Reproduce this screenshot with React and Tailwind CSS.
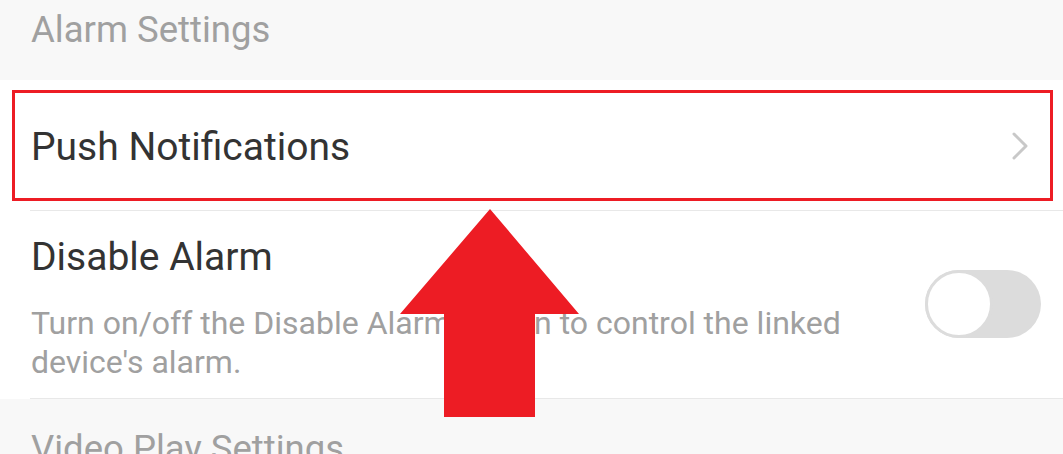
export default function App() {
  return (
    <div className="relative w-[1063px] h-[454px] overflow-hidden bg-white font-['Roboto',sans-serif]">
      {/* Section header */}
      <div className="h-[80px] bg-[#f8f8f8] pl-[31px] pt-[8px]">
        <p className="text-[36.5px] leading-[44px] text-[#a0a0a0]">Alarm Settings</p>
      </div>

      {/* Push Notifications row */}
      <div className="relative">
        <div className="flex items-start justify-between h-[130px] pl-[31px] pr-[34px] pt-[45px]">
          <span className="text-[39px] leading-[44px] text-[#333333]">Push Notifications</span>
          <svg className="mt-[6px]" width="18" height="30" viewBox="0 0 18 30" fill="none">
            <polyline points="3,3 15,15 3,27" stroke="#c8c8c8" strokeWidth="3" strokeLinecap="round" strokeLinejoin="round" />
          </svg>
        </div>
        <div className="ml-[30px] h-px bg-[#e8e8e8]" />
        {/* highlight box */}
        <div className="absolute left-[12px] top-[10px] w-[1041px] h-[111px] border-[3px] border-[#ed1c24]" />
      </div>

      {/* Disable Alarm row */}
      <div className="flex items-start justify-between pl-[31px] pr-[22px] h-[187px] pt-[24px]">
        <div className="flex flex-col">
          <span className="text-[39px] leading-[44px] text-[#333333]">Disable Alarm</span>
          <p className="mt-[25px] w-[850px] text-[32px] leading-[39px] text-[#a0a0a0]">
            Turn on/off the Disable Alarm button to control the linked device's alarm.
          </p>
        </div>
        <div className="relative mt-[35px] w-[116px] h-[68px] rounded-full bg-[#dcdcdc]">
          <div className="absolute left-0 top-0 w-[68px] h-[68px] rounded-full bg-white border-[3px] border-[#dcdcdc]" />
        </div>
      </div>
      <div className="ml-[30px] h-px bg-[#e8e8e8]" />

      {/* Next section header */}
      <div className="h-[80px] bg-[#f8f8f8] pl-[31px] pt-[28px]">
        <p className="text-[36.5px] leading-[44px] text-[#a0a0a0]">Video Play Settings</p>
      </div>

      {/* annotation arrow */}
      <svg className="absolute left-[400px] top-[209px]" width="180" height="209" viewBox="0 0 180 209">
        <polygon points="90,0 179,105 135,105 135,208 44,208 44,105 0,105" fill="#ed1c24" />
      </svg>
    </div>
  )
}
